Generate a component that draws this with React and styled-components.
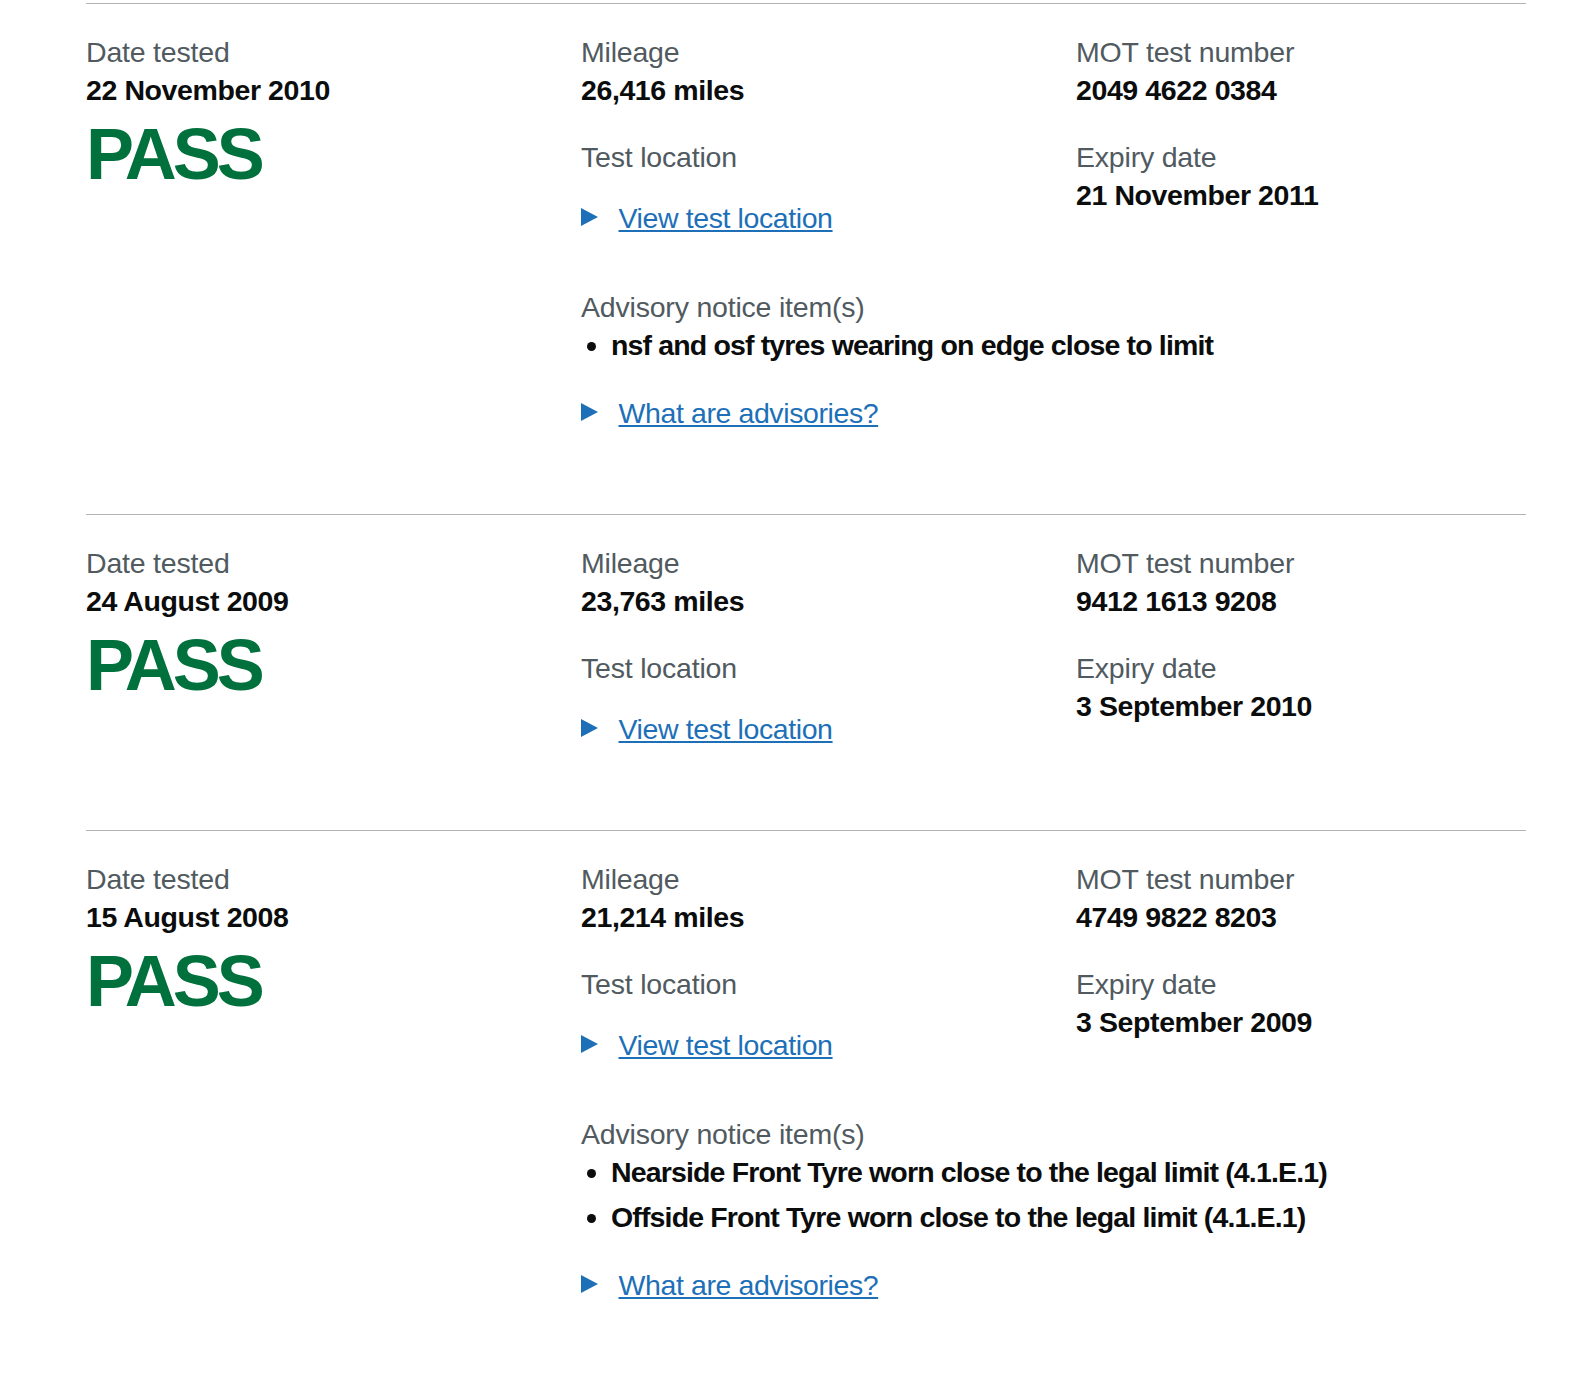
import React from "react";
import styled, { createGlobalStyle } from "styled-components";

const GlobalStyle = createGlobalStyle`
  html, body {
    margin: 0;
    padding: 0;
    background: #fff;
  }
  body {
    font-family: "Liberation Sans", Arial, sans-serif;
    color: #0b0c0c;
    -webkit-font-smoothing: antialiased;
  }
`;

const Page = styled.main`
  padding: 3px 0 0 86px;
`;

const History = styled.div`
  width: 1440px;
`;

// one-third | two-thirds, like the govuk grid row
const Record = styled.section`
  border-top: 1.5px solid #b1b4b6;
  padding: 30px 0 30px;
  display: grid;
  grid-template-columns: 450px 945px;
  column-gap: 45px;
  align-items: start;
`;

const InnerRow = styled.div`
  display: grid;
  grid-template-columns: repeat(2, 450px);
  column-gap: 45px;
  align-items: start;
`;

const Column = styled.div`
  display: flex;
  flex-direction: column;
  align-items: flex-start;
`;

const Label = styled.div`
  font-size: 28.5px;
  line-height: 37.5px;
  letter-spacing: -0.2px;
  color: #505a5f;
`;

const Value = styled.div`
  font-size: 28.5px;
  line-height: 37.5px;
  font-weight: 700;
  letter-spacing: -0.4px;
  color: #0b0c0c;
  margin-bottom: ${(p) => (p.$last ? "0" : "30px")};
`;

const Result = styled.div`
  margin-top: 8px;
  font-size: 72px;
  line-height: 75px;
  font-weight: 700;
  letter-spacing: -4px;
  color: #00703c;
`;

const Details = styled.details`
  margin: 23.5px 0 51.5px;
  font-size: 28.5px;
  line-height: 37.5px;
`;

const Summary = styled.summary`
  display: inline-block;
  position: relative;
  padding-left: 37.5px;
  color: #1d70b8;
  cursor: pointer;
  list-style: none;

  &::-webkit-details-marker {
    display: none;
  }

  &::before {
    content: "";
    position: absolute;
    left: 0;
    top: 8px;
    width: 0;
    height: 0;
    border-style: solid;
    border-width: 9.5px 0 9.5px 17px;
    border-color: transparent transparent transparent currentColor;
  }
`;

const SummaryText = styled.span`
  letter-spacing: -0.4px;
  text-decoration: underline;
  text-decoration-thickness: 1.5px;
  text-underline-offset: 2px;
`;

const AdvisoryList = styled.ul`
  margin: 0;
  padding-left: 30px;
  list-style: disc;
`;

const AdvisoryItem = styled.li`
  font-size: 28.5px;
  line-height: 37.5px;
  font-weight: 700;
  letter-spacing: -0.85px;
  margin-bottom: 7.5px;
`;

const records = [
  {
    date: "22 November 2010",
    mileage: "26,416 miles",
    number: "2049 4622 0384",
    expiry: "21 November 2011",
    advisories: ["nsf and osf tyres wearing on edge close to limit"],
  },
  {
    date: "24 August 2009",
    mileage: "23,763 miles",
    number: "9412 1613 9208",
    expiry: "3 September 2010",
    advisories: [],
  },
  {
    date: "15 August 2008",
    mileage: "21,214 miles",
    number: "4749 9822 8203",
    expiry: "3 September 2009",
    advisories: [
      "Nearside Front Tyre worn close to the legal limit (4.1.E.1)",
      "Offside Front Tyre worn close to the legal limit (4.1.E.1)",
    ],
  },
];

const Disclosure = ({ children }) => (
  <Details>
    <Summary>
      <SummaryText>{children}</SummaryText>
    </Summary>
  </Details>
);

const TestRecord = ({ record }) => (
  <Record>
    <Column>
      <Label>Date tested</Label>
      <Value $last>{record.date}</Value>
      <Result>PASS</Result>
    </Column>

    <Column>
      <InnerRow>
        <Column>
          <Label>Mileage</Label>
          <Value>{record.mileage}</Value>
          <Label>Test location</Label>
          <Disclosure>View test location</Disclosure>
        </Column>
        <Column>
          <Label>MOT test number</Label>
          <Value>{record.number}</Value>
          <Label>Expiry date</Label>
          <Value $last>{record.expiry}</Value>
        </Column>
      </InnerRow>

      {record.advisories.length > 0 && (
        <>
          <Label>Advisory notice item(s)</Label>
          <AdvisoryList>
            {record.advisories.map((item) => (
              <AdvisoryItem key={item}>{item}</AdvisoryItem>
            ))}
          </AdvisoryList>
          <Disclosure>What are advisories?</Disclosure>
        </>
      )}
    </Column>
  </Record>
);

export default function App() {
  return (
    <>
      <GlobalStyle />
      <Page>
        <History>
          {records.map((r) => (
            <TestRecord key={r.number} record={r} />
          ))}
        </History>
      </Page>
    </>
  );
}
